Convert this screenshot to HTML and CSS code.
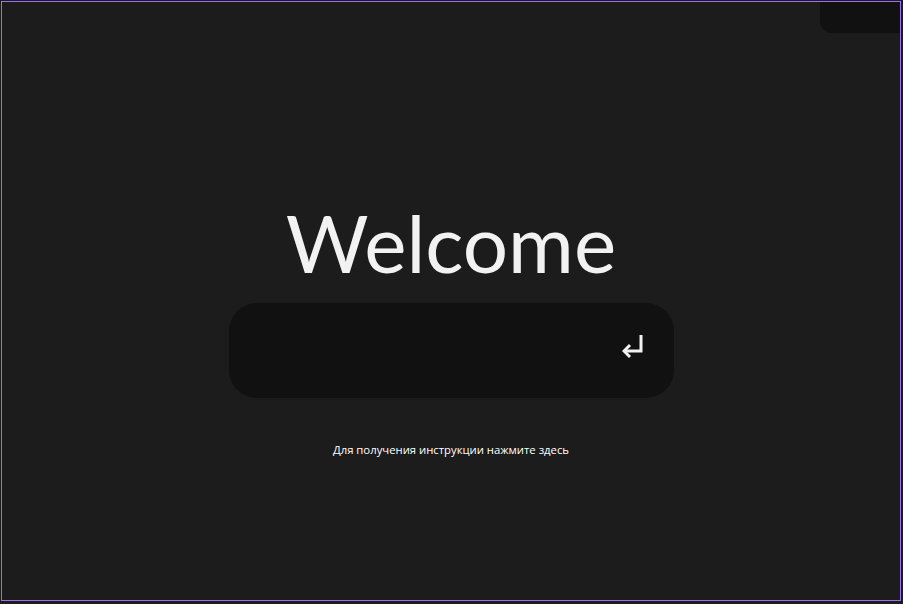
FILE: index.html
```html
<!DOCTYPE html>
<html lang="ru">
<head>
<meta charset="utf-8">
<title>Welcome</title>
<link rel="stylesheet" href="styles.css">
</head>
<body>
<div class="frame">
  <div class="corner-panel"></div>
  <main class="content">
    <h1 class="title">Welcome</h1>
    <div class="input-box">
      <input class="input-field" type="text" aria-label="input">
      <button class="enter-btn" aria-label="Enter">
        <svg width="22" height="24" viewBox="0 0 22 24" fill="none" stroke="#f2f2f2" stroke-width="3">
          <path d="M19 0 V16 H3" stroke-linejoin="miter"/>
          <path d="M8 10 L2 16 L8 22" stroke-linejoin="miter"/>
        </svg>
      </button>
    </div>
    <p class="hint">Для получения инструкции нажмите здесь</p>
  </main>
</div>
</body>
</html>
```
FILE: styles.css
```css
html, body {
  margin: 0;
  padding: 0;
  background: #1c1c1c;
}
body {
  width: 903px;
  height: 604px;
  overflow: hidden;
  font-family: "Lato", "Open Sans", sans-serif;
  color: #f2f2f2;
}
.frame {
  position: relative;
  box-sizing: border-box;
  width: 900px;
  height: 600px;
  margin: 1px;
  border: 1px solid #9d70f0;
  background: #1c1c1c;
}
.corner-panel {
  position: absolute;
  top: 0;
  right: 0;
  width: 80px;
  height: 31px;
  background: #111111;
  border-bottom-left-radius: 12px;
}
.content {
  display: flex;
  flex-direction: column;
  align-items: center;
  padding-top: 200px;
}
.title {
  margin: 0;
  font-size: 80px;
  line-height: 80px;
  font-weight: 400;
  color: #f2f2f2;
}
.input-box {
  margin-top: 21px;
  box-sizing: border-box;
  width: 445px;
  height: 95px;
  border-radius: 28px;
  background: #111111;
  display: flex;
  align-items: center;
  padding: 0 30px 0 30px;
}
.input-field {
  flex: 1;
  min-width: 0;
  background: transparent;
  border: none;
  outline: none;
  color: #f2f2f2;
  font-size: 20px;
}
.enter-btn {
  background: none;
  border: none;
  padding: 0 0 7px;
  display: flex;
  cursor: pointer;
}
.hint {
  margin: 44px 0 0;
  font-family: "Open Sans", "Noto Sans", sans-serif;
  font-size: 11.3px;
  line-height: 16px;
  color: #ffffff;
}
```
